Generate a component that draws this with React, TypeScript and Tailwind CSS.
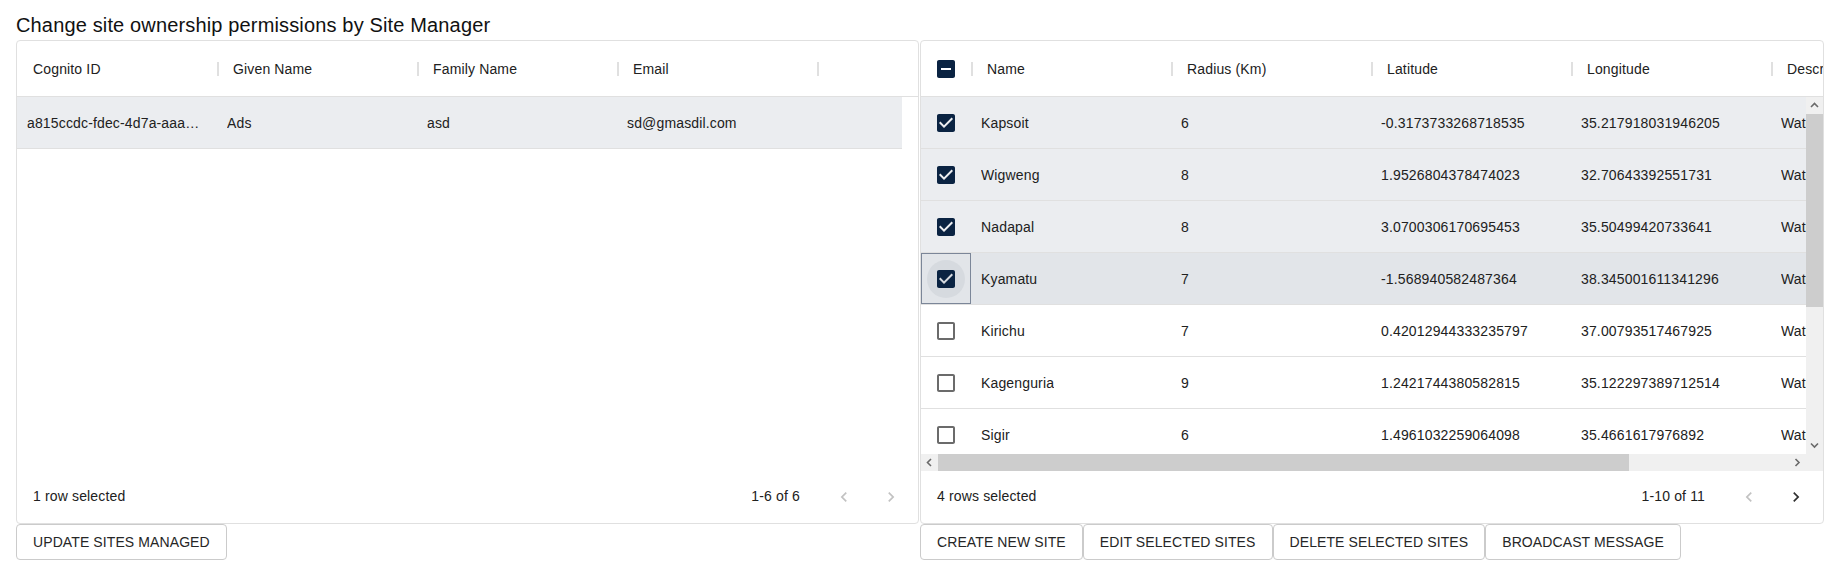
import React from "react";

const NAVY = "#0a2342";

type Site = { name: string; r: number; lat: string; lng: string; desc: string; checked: boolean };

const sites: Site[] = [
  { name: "Kapsoit", r: 6, lat: "-0.3173733268718535", lng: "35.217918031946205", desc: "Water point", checked: true },
  { name: "Wigweng", r: 8, lat: "1.9526804378474023", lng: "32.70643392551731", desc: "Water point", checked: true },
  { name: "Nadapal", r: 8, lat: "3.0700306170695453", lng: "35.50499420733641", desc: "Water point", checked: true },
  { name: "Kyamatu", r: 7, lat: "-1.568940582487364", lng: "38.345001611341296", desc: "Water point", checked: true },
  { name: "Kirichu", r: 7, lat: "0.42012944333235797", lng: "37.00793517467925", desc: "Water point", checked: false },
  { name: "Kagenguria", r: 9, lat: "1.2421744380582815", lng: "35.122297389712514", desc: "Water point", checked: false },
  { name: "Sigir", r: 6, lat: "1.4961032259064098", lng: "35.4661617976892", desc: "Water point", checked: false },
];

function CheckIcon({ state }: { state: "checked" | "unchecked" | "indeterminate" }) {
  if (state === "checked")
    return (
      <svg width="24" height="24" viewBox="0 0 24 24" fill={NAVY}>
        <path d="M19 3H5c-1.11 0-2 .9-2 2v14c0 1.1.89 2 2 2h14c1.11 0 2-.9 2-2V5c0-1.1-.89-2-2-2zm-9 14l-5-5 1.41-1.41L10 14.17l7.59-7.59L19 8l-9 9z" />
      </svg>
    );
  if (state === "indeterminate")
    return (
      <svg width="24" height="24" viewBox="0 0 24 24" fill={NAVY}>
        <path d="M19 3H5c-1.1 0-2 .9-2 2v14c0 1.1.9 2 2 2h14c1.1 0 2-.9 2-2V5c0-1.1-.9-2-2-2zm-2 10H7v-2h10v2z" />
      </svg>
    );
  return (
    <svg width="24" height="24" viewBox="0 0 24 24" fill="#6b6b6b">
      <path d="M19 5v14H5V5h14m0-2H5c-1.1 0-2 .9-2 2v14c0 1.1.9 2 2 2h14c1.1 0 2-.9 2-2V5c0-1.1-.9-2-2-2z" />
    </svg>
  );
}

function Sep() {
  return <div className="absolute top-[21px] -right-[2px] h-[14px] w-[2px] bg-[#e0e0e0]" />;
}

function HeadCell({ label }: { label: string }) {
  return (
    <div className="relative flex w-[200px] shrink-0 items-center overflow-visible pt-[2px] pl-[16px] whitespace-nowrap">
      {label}
      <Sep />
    </div>
  );
}

function Cell({ children }: { children: React.ReactNode }) {
  return (
    <div className="flex w-[200px] shrink-0 items-center overflow-hidden px-[10px] pt-[1px] whitespace-nowrap">
      <span className="truncate">{children}</span>
    </div>
  );
}

function Chevron({ dir, enabled }: { dir: "left" | "right"; enabled: boolean }) {
  return (
    <div className="flex h-[40px] w-[40px] items-center justify-center">
      <svg width="20" height="20" viewBox="0 0 24 24" fill={enabled ? "#303030" : "#c2c2c2"}>
        {dir === "left" ? (
          <path d="M15.41 16.59 10.83 12l4.58-4.59L14 6l-6 6 6 6z" />
        ) : (
          <path d="M8.59 16.59 13.17 12 8.59 7.41 10 6l6 6-6 6z" />
        )}
      </svg>
    </div>
  );
}

function Footer({ selected, range, nextEnabled }: { selected: string; range: string; nextEnabled: boolean }) {
  return (
    <div className="flex h-[52px] shrink-0 items-center justify-between pb-[1px] pl-[16px]">
      <span>{selected}</span>
      <div className="flex items-center pr-[7px]">
        <span>{range}</span>
        <div className="ml-[24px] flex gap-[7px]">
          <Chevron dir="left" enabled={false} />
          <Chevron dir="right" enabled={nextEnabled} />
        </div>
      </div>
    </div>
  );
}

function Btn({ label }: { label: string }) {
  return (
    <button className="flex h-[36px] items-center rounded-[4px] border border-[#cbcbcb] bg-white px-[16px] text-[14px] tracking-[0.1px] text-[#262626]">
      {label}
    </button>
  );
}

function ArrowSvg({ dir }: { dir: "up" | "down" | "left" | "right" }) {
  const d =
    dir === "up"
      ? "M1 5 L4.5 1.5 L8 5"
      : dir === "down"
      ? "M1 1.5 L4.5 5 L8 1.5"
      : dir === "left"
      ? "M5 1 L1.5 4.5 L5 8"
      : "M1.5 1 L5 4.5 L1.5 8";
  const w = dir === "up" || dir === "down" ? 9 : 7;
  const h = dir === "up" || dir === "down" ? 7 : 9;
  return (
    <svg width={w} height={h} viewBox={`0 0 ${w} ${h}`} fill="none" stroke="#6a6a6a" strokeWidth="1.6">
      <path d={d} />
    </svg>
  );
}

export default function App() {
  return (
    <div className="min-h-[587px] bg-white pl-[16px] font-['Liberation_Sans',Arial,sans-serif] text-[14px] tracking-[0.15px] text-[#212121]">
      <h6 className="pt-[14px] pb-[3px] text-[20px] leading-[23px] font-normal text-[#111]">
        Change site ownership permissions by Site Manager
      </h6>
      <div className="flex gap-[1px]">
        {/* Left panel */}
        <div className="flex w-[903px] flex-col">
          <div className="flex h-[484px] flex-col overflow-hidden rounded-[4px] border border-[#e0e0e0]">
            <div className="flex h-[56px] shrink-0 border-b border-[#e0e0e0]">
              <HeadCell label="Cognito ID" />
              <HeadCell label="Given Name" />
              <HeadCell label="Family Name" />
              <HeadCell label="Email" />
            </div>
            <div className="flex flex-1 flex-col">
              <div className="flex h-[52px] w-[885px] shrink-0 border-b border-[#e0e0e0] bg-[#ebedf0]">
                <Cell>a815ccdc-fdec-4d7a-aaa3-9c1e2b4f7d10</Cell>
                <Cell>Ads</Cell>
                <Cell>asd</Cell>
                <Cell>sd@gmasdil.com</Cell>
              </div>
            </div>
            <Footer selected="1 row selected" range="1-6 of 6" nextEnabled={false} />
          </div>
          <div className="flex">
            <Btn label="UPDATE SITES MANAGED" />
          </div>
        </div>

        {/* Right panel */}
        <div className="flex w-[904px] flex-col">
          <div className="flex h-[484px] flex-col overflow-hidden rounded-[4px] border border-[#e0e0e0]">
            <div className="flex h-[56px] shrink-0 overflow-hidden border-b border-[#e0e0e0]">
              <div className="relative flex w-[50px] shrink-0 items-center justify-center">
                <CheckIcon state="indeterminate" />
                <Sep />
              </div>
              <HeadCell label="Name" />
              <HeadCell label="Radius (Km)" />
              <HeadCell label="Latitude" />
              <HeadCell label="Longitude" />
              <HeadCell label="Description" />
            </div>
            <div className="flex h-[374px] shrink-0 flex-col">
              <div className="flex h-[357px] shrink-0">
                <div className="w-[885px] shrink-0 overflow-hidden">
                  {sites.map((s, i) => {
                    const focused = i === 3;
                    const bg = focused ? "bg-[#e2e5e9]" : s.checked ? "bg-[#ebedf0]" : "bg-white";
                    return (
                      <div key={s.name} className={`flex h-[52px] w-[1050px] border-b border-[#e0e0e0] ${bg}`}>
                        <div
                          className={`flex w-[50px] shrink-0 items-center justify-center ${
                            focused ? "ring-1 ring-inset ring-[#7b8698]" : ""
                          }`}
                        >
                          <div
                            className={`flex h-[38px] w-[38px] items-center justify-center rounded-full ${
                              focused ? "bg-[#d6dadf]" : ""
                            }`}
                          >
                            <CheckIcon state={s.checked ? "checked" : "unchecked"} />
                          </div>
                        </div>
                        <Cell>{s.name}</Cell>
                        <Cell>{s.r}</Cell>
                        <Cell>{s.lat}</Cell>
                        <Cell>{s.lng}</Cell>
                        <Cell>{s.desc}</Cell>
                      </div>
                    );
                  })}
                </div>
                {/* vertical scrollbar */}
                <div className="flex w-[17px] shrink-0 flex-col bg-[#f0f0f0]">
                  <div className="flex h-[17px] shrink-0 items-center justify-center">
                    <ArrowSvg dir="up" />
                  </div>
                  <div className="h-[193px] shrink-0 bg-[#cdcdcd]" />
                  <div className="flex-1" />
                  <div className="flex h-[17px] shrink-0 items-center justify-center">
                    <ArrowSvg dir="down" />
                  </div>
                </div>
              </div>
              {/* horizontal scrollbar */}
              <div className="flex h-[17px] shrink-0 bg-[#f0f0f0]">
                <div className="flex w-[17px] shrink-0 items-center justify-center">
                  <ArrowSvg dir="left" />
                </div>
                <div className="flex flex-1">
                  <div className="h-full w-[691px] bg-[#cdcdcd]" />
                </div>
                <div className="flex w-[17px] shrink-0 items-center justify-center">
                  <ArrowSvg dir="right" />
                </div>
                <div className="w-[17px] shrink-0" />
              </div>
            </div>
            <Footer selected="4 rows selected" range="1-10 of 11" nextEnabled={true} />
          </div>
          <div className="flex">
            <Btn label="CREATE NEW SITE" />
            <Btn label="EDIT SELECTED SITES" />
            <Btn label="DELETE SELECTED SITES" />
            <Btn label="BROADCAST MESSAGE" />
          </div>
        </div>
      </div>
    </div>
  );
}
